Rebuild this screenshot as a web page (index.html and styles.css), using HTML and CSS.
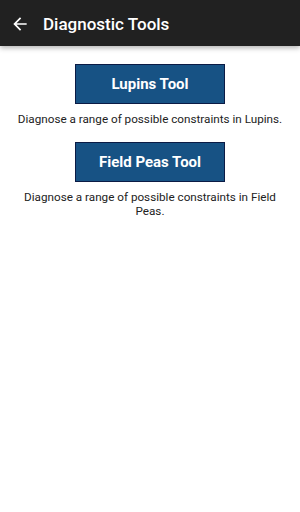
FILE: index.html
```html
<!DOCTYPE html>
<html lang="en">
<head>
    <meta charset="UTF-8">
    <meta name="viewport" content="width=device-width, initial-scale=1.0">
    <title>Diagnostic Tools</title>
    <link rel="stylesheet" href="styles.css">
</head>
<body>
    <div class="toolbar">
        <svg class="back" width="20" height="20" viewBox="0 0 24 24">
            <path d="M20 11H7.83l5.59-5.59L12 4l-8 8 8 8 1.41-1.41L7.83 13H20v-2z" fill="#fff"/>
        </svg>
        <div class="title">Diagnostic Tools</div>
    </div>

    <div class="content">
        <!-- Lupins -->
        <div class="tool">
            <div class="tool-btn">Lupins Tool</div>
            <div class="desc">Diagnose a range of possible constraints in Lupins.</div>
        </div>

        <!-- Field Peas -->
        <div class="tool">
            <div class="tool-btn">Field Peas Tool</div>
            <div class="desc">Diagnose a range of possible constraints in Field Peas.</div>
        </div>
    </div>
</body>
</html>
```

FILE: styles.css
```css
body {
    margin: 0;
    font-family: Roboto, "Noto Sans", sans-serif;
    background: #fff;
}
.toolbar {
    height: 46px;
    background: #212121;
    display: flex;
    align-items: center;
    padding-left: 10px;
    padding-top: 1px;
    box-sizing: border-box;
    box-shadow: 0 2px 5px rgba(0,0,0,0.3);
}
.back {
    display: block;
}
.title {
    color: #fff;
    font-size: 17px;
    font-weight: 500;
    margin-left: 13px;
}
.content {
    padding: 18px 16px 0;
    display: flex;
    flex-direction: column;
    gap: 16px;
}
.tool {
    display: flex;
    flex-direction: column;
    align-items: center;
}
.tool-btn {
    width: 148px;
    height: 38px;
    background: #175284;
    border: 1px solid #0b1b45;
    color: #fff;
    font-size: 15px;
    font-weight: 700;
    display: flex;
    align-items: center;
    justify-content: center;
}
.desc {
    margin-top: 8px;
    font-size: 11.7px;
    color: #222;
    text-align: center;
    line-height: 14px;
}
```
